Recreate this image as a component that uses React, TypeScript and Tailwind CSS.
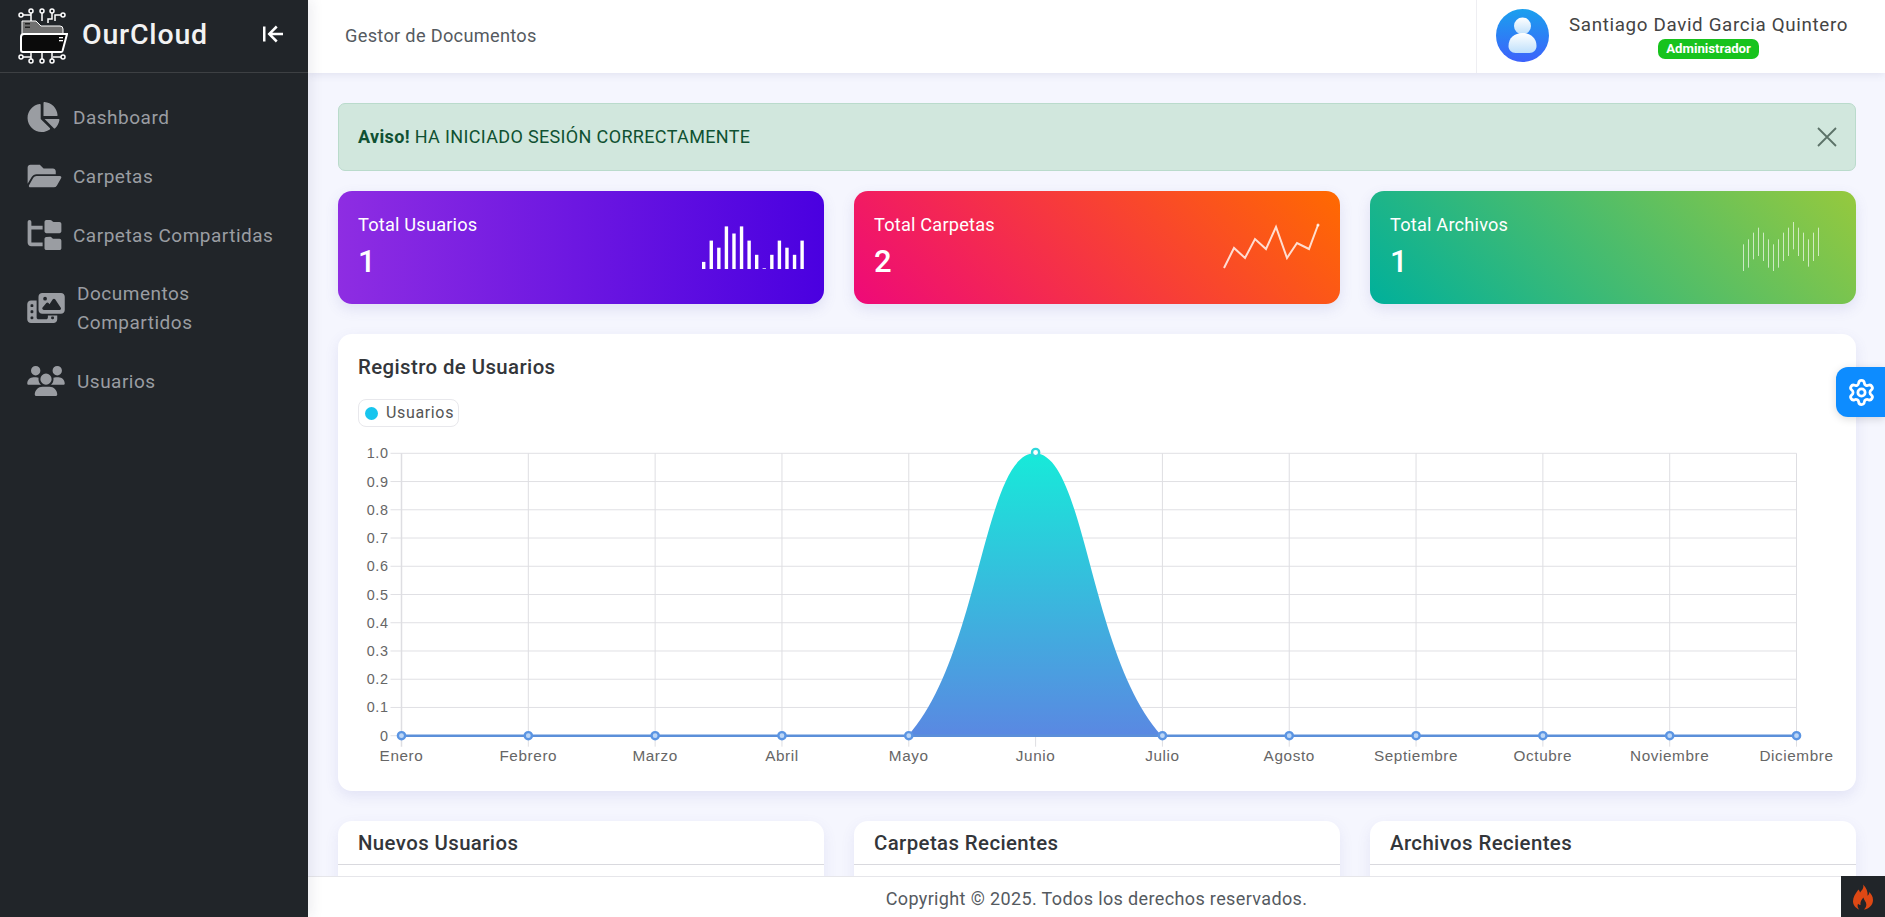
import { ReactNode } from "react";
import { FaChartPie, FaFolderOpen } from "react-icons/fa";
import { FaFolderTree, FaPhotoFilm, FaUsers } from "react-icons/fa6";
import { BiArrowToLeft } from "react-icons/bi";
import { Settings } from "lucide-react";

const months = ["Enero", "Febrero", "Marzo", "Abril", "Mayo", "Junio", "Julio", "Agosto", "Septiembre", "Octubre", "Noviembre", "Diciembre"];
const ticks = ["0", "0.1", "0.2", "0.3", "0.4", "0.5", "0.6", "0.7", "0.8", "0.9", "1.0"];

const barValues = [1, 4, 3, 6, 5, 6, 4, 2, 0.1, 2, 4, 3, 2, 4];
const linePoints = "2,43 12,23 23,33 33,14 44,24 54,2 65,33 75,18 87,24 96,0";
const waveLines = [
	[195, 275], [180, 265], [160, 240], [145, 230], [160, 245], [180, 265], [195, 275], [180, 265],
	[160, 245], [145, 230], [128, 210], [145, 230], [160, 245], [180, 262], [160, 245], [145, 230],
];

const Logo = () => (
	<svg viewBox="18 6 50 58" className="h-[58px] w-[50px] shrink-0" fill="none">
		<g stroke="#fff" strokeWidth="1.500">
			<path d="M31 12v8M42 12v8M52 12v6h-4v4M23 14h8M61 14h-6v6M31 58v-7M42 58v-7M52 58v-7M23 56h8v-5M61 56h-8" />
			<circle cx="31" cy="10" r="2" /><circle cx="42" cy="10" r="2" /><circle cx="52" cy="10" r="2" />
			<circle cx="21" cy="14" r="2" /><circle cx="63" cy="14" r="2" />
			<circle cx="21" cy="56" r="2" /><circle cx="63" cy="56" r="2" />
			<circle cx="31" cy="60" r="2" /><circle cx="42" cy="60" r="2" /><circle cx="52" cy="60" r="2" />
		</g>
		<path d="M22 20h14l5 5h19a3 3 0 0 1 3 3v6H22z" fill="#707070" stroke="#fff" strokeWidth="1" />
		<rect x="25" y="22" width="5" height="1.500" fill="#222" /><rect x="25" y="25.500" width="5" height="1.500" fill="#222" />
		<path d="M24 33h43l-4.500 17a1.500 1.500 0 0 1-1.500 1H23a2 2 0 0 1-2-2V36a3 3 0 0 1 3-3z" fill="#0b0b0b" stroke="#fff" strokeWidth="2" />
		<rect x="59" y="36" width="4" height="1.300" fill="#fff" /><rect x="59" y="39" width="4" height="1.300" fill="#fff" />
	</svg>
);

const NavItem = ({ icon, children }: { icon: ReactNode; children: ReactNode }) => (
	<a className="flex items-center py-[14.500px] pl-[27px] pr-4 text-[19px] leading-[29px] tracking-[0.5px] text-[#9a9da2]">
		{icon}
		{children}
	</a>
);

const Sidebar = () => (
	<aside className="z-10 flex w-[308px] shrink-0 flex-col bg-[#212529] shadow-[4px_0_12px_rgba(40,40,80,0.08)]">
		<div className="flex h-[73px] items-center border-b border-[#3d4043] pb-[1px] pl-[18px] pr-[20px]">
			<Logo />
			<span className="ml-[14px] text-[28.500px] font-medium tracking-[0.8px] text-[#f2f2f2]">OurCloud</span>
			<BiArrowToLeft className="mb-[4px] ml-auto h-[30px] w-[30px] text-white" />
		</div>
		<nav className="flex flex-col pt-[14.500px]">
			<NavItem icon={<FaChartPie className="mr-[13px] h-[30px] w-[33px] shrink-0" />}>Dashboard</NavItem>
			<NavItem icon={<FaFolderOpen className="mr-[11px] h-[30px] w-[35px] shrink-0" />}>Carpetas</NavItem>
			<NavItem icon={<FaFolderTree className="mr-[11px] h-[30px] w-[35px] shrink-0" />}>Carpetas Compartidas</NavItem>
			<NavItem icon={<FaPhotoFilm className="mr-[12px] h-[30px] w-[38px] shrink-0" />}>
				<span className="w-[150px]">Documentos Compartidos</span>
			</NavItem>
			<NavItem icon={<FaUsers className="mr-[12px] h-[30px] w-[38px] shrink-0" />}>Usuarios</NavItem>
		</nav>
	</aside>
);

const Avatar = () => (
	<svg viewBox="0 0 53 53" className="h-[53px] w-[53px] shrink-0">
		<defs>
			<linearGradient id="avatarBg" x1="0" y1="0" x2="0" y2="1">
				<stop offset="0" stopColor="#1aa0ee" />
				<stop offset="1" stopColor="#3d62fb" />
			</linearGradient>
			<linearGradient id="avatarFg" x1="0" y1="0" x2="0" y2="1">
				<stop offset="0" stopColor="#ffffff" />
				<stop offset="1" stopColor="#bfe0fb" />
			</linearGradient>
		</defs>
		<circle cx="26.500" cy="26.500" r="26.500" fill="url(#avatarBg)" />
		<circle cx="26.500" cy="17" r="8.500" fill="url(#avatarFg)" />
		<path d="M12.500 37c0-8 6-13 14-13s14 5 14 13c0 4-3 7-7 7h-14c-4 0-7-3-7-7z" fill="url(#avatarFg)" />
	</svg>
);

const Topbar = () => (
	<header className="z-[5] flex h-[73px] shrink-0 items-center justify-between bg-white pl-[37px] shadow-[0_2px_8px_rgba(60,60,120,0.1)]">
		<span className="mb-[2px] text-[18.200px] tracking-[0.3px] text-[#555a5f]">Gestor de Documentos</span>
		<div className="flex h-full w-[409px] items-center border-l border-[#eeeef2] pb-[2px] pl-[19px]">
			<Avatar />
			<div className="ml-[20px] flex flex-col items-center">
				<span className="text-[18.800px] leading-[26px] tracking-[0.65px] text-[#444]">Santiago David Garcia Quintero</span>
				<span className="mt-[1px] rounded-[7px] bg-[#17c31d] px-[8px] text-[13.200px] font-bold leading-[20px] text-white">Administrador</span>
			</div>
		</div>
	</header>
);

const StatCard = ({ title, value, gradient, children }: { title: string; value: string; gradient: string; children: ReactNode }) => (
	<div className={`flex h-[113px] items-center justify-between rounded-[14px] px-[20px] text-white shadow-[0_5px_14px_rgba(90,90,180,0.14)] ${gradient}`}>
		<div>
			<div className="text-[18.200px] leading-[24px] tracking-[0.2px]">{title}</div>
			<div className="mt-[5px] text-[31px] font-medium leading-[40px]">{value}</div>
		</div>
		{children}
	</div>
);

const BarSpark = () => (
	<svg width="104" height="45" className="mb-[1px] mr-[-2px]">
		{barValues.map((v, i) => (
			<rect key={i} x={i * 7.57} y={44 - v * 7.1} width="3.400" height={v * 7.1} fill="#fff" />
		))}
	</svg>
);

const LineSpark = () => (
	<svg width="100" height="48" className="mr-[-2px] mt-[2px] overflow-visible">
		<polyline points={linePoints} fill="none" stroke="#fff" strokeOpacity="0.8" strokeWidth="2" />
		<circle cx="96" cy="0" r="1.500" fill="#fff" fillOpacity="0.8" />
	</svg>
);

const WaveSpark = () => (
	<svg width="78" height="50" className="mb-[1px] mr-[15px]">
		{waveLines.map(([a, b], i) => (
			<line key={i} x1={0.5 + i * 5} x2={0.5 + i * 5} y1={(a - 128) / 3} y2={(b - 128) / 3} stroke="#fff" strokeOpacity="0.65" strokeWidth="1" />
		))}
	</svg>
);

const X0 = 401.5;
const DX = 126.82;
const Y0 = 735.7;
const DY = 28.24;

const UserChart = () => (
	<svg viewBox="338 440 1518 340" className="block h-[340px] w-full">
		<defs>
			<linearGradient id="chartFill" gradientUnits="userSpaceOnUse" x1="0" y1="453" x2="0" y2="736">
				<stop offset="0" stopColor="#17ead9" />
				<stop offset="1" stopColor="#5a88e2" />
			</linearGradient>
		</defs>
		{ticks.map((t, i) => {
			const y = Y0 - i * DY;
			return (
				<g key={t}>
					<line x1={X0 - 11} x2={X0 + 11 * DX} y1={y} y2={y} stroke="#e0e0e4" strokeWidth="1" />
					<text x={X0 - 13} y={y + 5} textAnchor="end" fontSize="14.400" letterSpacing="0.6" fill="#666" fontFamily="'Liberation Sans', sans-serif">
						{t}
					</text>
				</g>
			);
		})}
		{months.map((m, i) => {
			const x = X0 + i * DX;
			return (
				<g key={m}>
					<line x1={x} x2={x} y1={Y0 - 10 * DY} y2={Y0 + 11} stroke="#dedee2" strokeWidth={i === 0 ? 1.500 : 1} />
					<text x={x} y={Y0 + 25} textAnchor="middle" fontSize="15.300" letterSpacing="0.6" fill="#666" fontFamily="'Liberation Sans', sans-serif">
						{m}
					</text>
				</g>
			);
		})}
		<path d="M908 735.700C980 655.600 984 453.300 1034.700 453.300C1085.700 453.300 1089 655.600 1161.700 735.700Z" fill="url(#chartFill)" />
		<line x1={X0} x2={X0 + 11 * DX} y1={Y0} y2={Y0} stroke="#5b8fd9" strokeWidth="2.400" />
		{months.map((m, i) => (
			<circle
				key={m}
				cx={X0 + i * DX}
				cy={i === 5 ? 452.5 : Y0}
				r="3.600"
				fill={i === 5 ? "#fff" : "#bcd6f6"}
				stroke={i === 5 ? "#2fd8db" : "#5b95e3"}
				strokeWidth="2.400"
			/>
		))}
	</svg>
);

const ListCard = ({ title }: { title: string }) => (
	<div className="h-[120px] rounded-[14px] bg-white shadow-[0_5px_14px_rgba(90,90,180,0.1)]">
		<div className="flex h-[44px] items-center border-b border-[#d9d9de] px-[20px] pt-[1px] text-[20.400px] font-medium leading-none tracking-[0.4px] text-[#33363a]">
			{title}
		</div>
	</div>
);

export default function App() {
	return (
		<div className="relative flex h-screen overflow-hidden bg-[#f5f6fe] font-[Roboto,sans-serif]">
			<Sidebar />
			<div className="flex min-w-0 flex-1 flex-col">
				<Topbar />
				<main className="min-h-0 flex-1 overflow-hidden pl-[30px] pr-[29px] pt-[30px]">
					<div className="flex h-[68px] items-center justify-between rounded-[7px] border border-[#badbcc] bg-[#d1e7dd] pb-[1px] pl-[19px] pr-[18px] text-[18px] tracking-[0.35px] text-[#0f5132]">
						<span>
							<strong className="font-bold">Aviso!</strong> HA INICIADO SESIÓN CORRECTAMENTE
						</span>
						<svg viewBox="0 0 20 20" className="h-[20px] w-[20px]" stroke="#5c7268" strokeWidth="1.800">
							<path d="M1 1l18 18M19 1L1 19" />
						</svg>
					</div>

					<div className="mt-[20px] grid grid-cols-3 gap-[30px]">
						<StatCard title="Total Usuarios" value="1" gradient="bg-[linear-gradient(90deg,#8e2de2,#4a00e0)]">
							<BarSpark />
						</StatCard>
						<StatCard title="Total Carpetas" value="2" gradient="bg-[linear-gradient(45deg,#ee0979,#ff6a00)]">
							<LineSpark />
						</StatCard>
						<StatCard title="Total Archivos" value="1" gradient="bg-[linear-gradient(45deg,#00b09b,#96c93d)]">
							<WaveSpark />
						</StatCard>
					</div>

					<section className="mt-[30px] h-[457px] rounded-[14px] bg-white pt-[17px] shadow-[0_5px_14px_rgba(90,90,180,0.12)]">
						<h2 className="px-[20px] text-[20.400px] font-medium leading-[32px] tracking-[0.4px] text-[#33363a]">Registro de Usuarios</h2>
						<div className="ml-[20px] mt-[16px] flex h-[28px] w-[101px] items-center rounded-[8px] border border-[#e8e8ec] pl-[6px] text-[16px] tracking-[0.65px] text-[#555]">
							<span className="mr-[8px] h-[13px] w-[13px] rounded-full bg-[#17c5ee]" />
							Usuarios
						</div>
						<div className="mt-[13px]">
							<UserChart />
						</div>
					</section>

					<div className="mt-[30px] grid grid-cols-3 gap-[30px]">
						<ListCard title="Nuevos Usuarios" />
						<ListCard title="Carpetas Recientes" />
						<ListCard title="Archivos Recientes" />
					</div>
				</main>
				<footer className="z-[5] flex h-[41px] shrink-0 items-center justify-center border-t border-[#e6e6ea] bg-white pt-[2px] text-[18px] tracking-[0.37px] text-[#555a5f]">
					Copyright © 2025. Todos los derechos reservados.
				</footer>
			</div>

			<button className="absolute right-0 top-[367px] z-20 flex h-[50px] w-[49px] items-center rounded-l-[12px] bg-[#0d8cff] pl-[11px] shadow-[0_2px_8px_rgba(0,0,0,0.15)]">
				<Settings className="h-[29px] w-[29px] text-white" strokeWidth={2.300} />
			</button>
			<div className="absolute bottom-0 right-0 z-20 flex h-[41px] w-[44px] items-center justify-center bg-[#212529]">
				<svg viewBox="0 0 24 30" className="h-[26px] w-[20px]">
					<path d="M12 0c1.500 4-1 6.500-3.500 9.500C7.800 8 7.500 7 6.500 6 3 11 0 15 0 20c0 4.500 3 8 7.500 10-2-2-2.500-4.500-1.500-7 1 1 2 1.500 3 1.500C8.500 21 10 18 12.500 15.500c.5 3 3.500 5 3.500 8.500 0 2.500-1 4.500-3 6 6.500-1 11-5.500 11-11.500 0-4-2-7-4.500-9.500 0 2-.7 3.500-2 4.500C18 9 16 3.500 12 0z" fill="#dd4814" />
				</svg>
			</div>
		</div>
	);
}
